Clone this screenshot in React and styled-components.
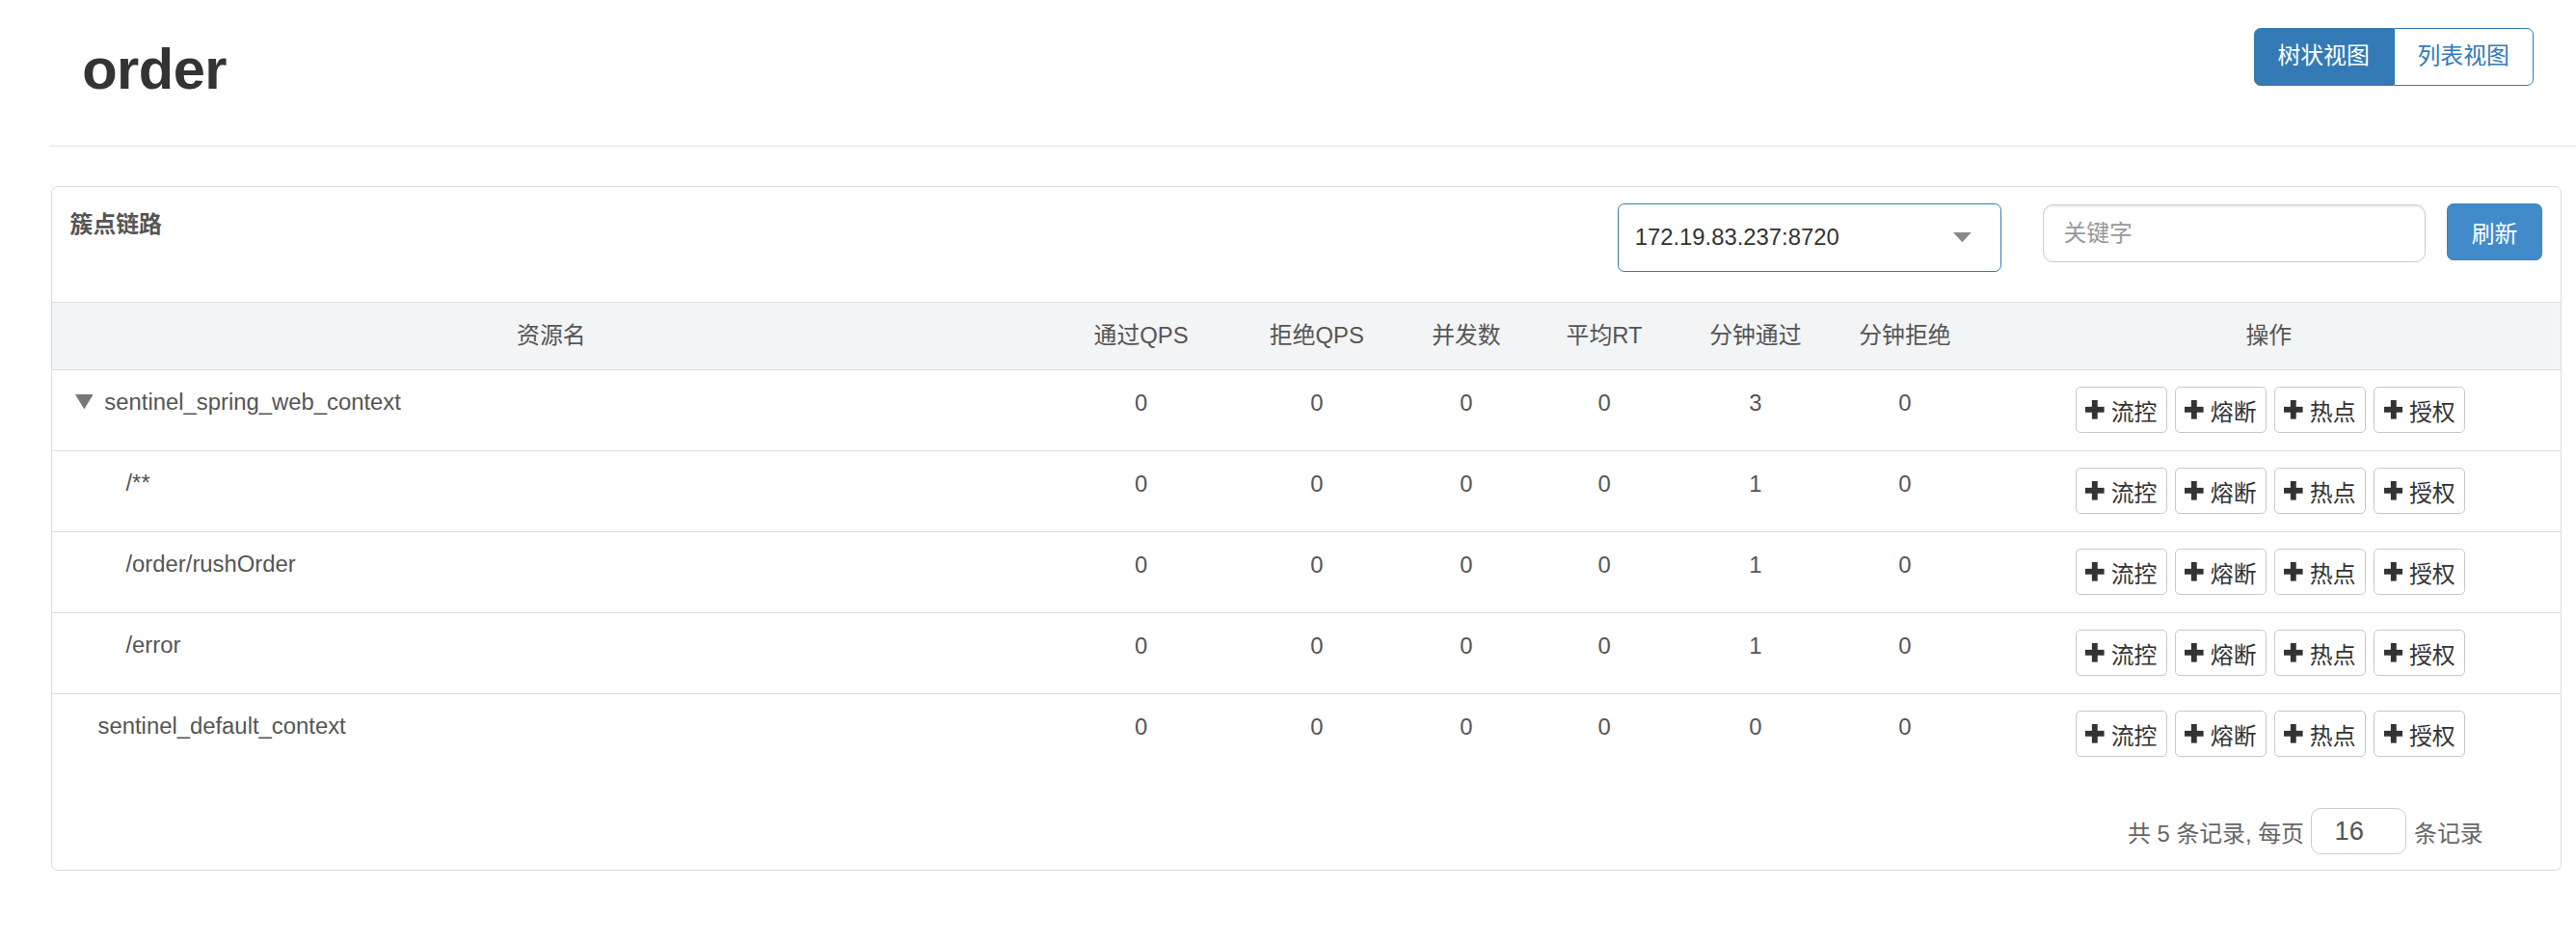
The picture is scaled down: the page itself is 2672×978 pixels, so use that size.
import React from "react";
import styled, { createGlobalStyle } from "styled-components";

const GlobalStyle = createGlobalStyle`
  html, body {
    margin: 0;
    padding: 0;
    background: #fff;
  }
  body {
    font-family: "Liberation Sans", Arial, "Noto Sans CJK SC", sans-serif;
    font-size: 14px;
    color: #333;
  }
  * {
    box-sizing: border-box;
  }
`;

const COLS = "608px 110px 104px 78px 90px 94px 88px 1fr";

const headers = ["资源名", "通过QPS", "拒绝QPS", "并发数", "平均RT", "分钟通过", "分钟拒绝", "操作"];

const rows = [
  { name: "sentinel_spring_web_context", level: "root", vals: [0, 0, 0, 0, 3, 0] },
  { name: "/**", level: "child", vals: [0, 0, 0, 0, 1, 0] },
  { name: "/order/rushOrder", level: "child", vals: [0, 0, 0, 0, 1, 0] },
  { name: "/error", level: "child", vals: [0, 0, 0, 0, 1, 0] },
  { name: "sentinel_default_context", level: "plain", vals: [0, 0, 0, 0, 0, 0] },
];

const actions = ["流控", "熔断", "热点", "授权"];

const indent = { root: 14, child: 45, plain: 28 };

function PlusIcon() {
  return (
    <svg width="11.5" height="11.5" viewBox="0 0 12 12">
      <rect x="4.2" y="0" width="3.6" height="12" fill="#333" />
      <rect x="0" y="4.2" width="12" height="3.6" fill="#333" />
    </svg>
  );
}

function App() {
  return (
    <Page>
      <GlobalStyle />
      <Header>
        <Title>order</Title>
        <ViewToggle>
          <ToggleButton $active>树状视图</ToggleButton>
          <ToggleButton>列表视图</ToggleButton>
        </ViewToggle>
      </Header>

      <Card>
        <CardHead>
          <CardTitle>簇点链路</CardTitle>
          <SelectBox>
            <span>172.19.83.237:8720</span>
            <svg width="11" height="6" viewBox="0 0 11 6">
              <polygon points="0,0 11,0 5.5,6" fill="#888" />
            </svg>
          </SelectBox>
          <SearchInput placeholder="关键字" />
          <RefreshButton>刷新</RefreshButton>
        </CardHead>

        <TableHead>
          {headers.map((h) => (
            <HeadCell key={h}>{h}</HeadCell>
          ))}
        </TableHead>

        {rows.map((r, i) => (
          <Row key={r.name} $last={i === rows.length - 1}>
            <NameCell $indent={indent[r.level]}>
              {r.level === "root" && (
                <svg width="11" height="9" viewBox="0 0 11 9">
                  <polygon points="0,0 11,0 5.5,9" fill="#777" />
                </svg>
              )}
              <span>{r.name}</span>
            </NameCell>
            {r.vals.map((v, j) => (
              <NumCell key={j}>{v}</NumCell>
            ))}
            <ActionCell>
              {actions.map((a) => (
                <ActionButton key={a}>
                  <PlusIcon />
                  {a}
                </ActionButton>
              ))}
            </ActionCell>
          </Row>
        ))}

        <Pager>
          <PagerText>共 5 条记录, 每页</PagerText>
          <PageSizeInput defaultValue="16" />
          <PagerText>条记录</PagerText>
        </Pager>
      </Card>
    </Page>
  );
}

export default App;

const Page = styled.div`
  zoom: 1.704;
  height: 574px;
  padding-left: 30px;
  overflow: hidden;
`;

const Header = styled.div`
  display: flex;
  justify-content: space-between;
  align-items: flex-start;
  height: 89px;
  padding: 0 26px 0 20px;
  border-bottom: 1px solid #e5e5e5;
`;

const Title = styled.h1`
  margin: 24px 0 0;
  font-size: 35px;
  line-height: 36px;
  font-weight: bold;
  letter-spacing: -0.3px;
  color: #333;
`;

const ViewToggle = styled.div`
  display: flex;
  margin-top: 17px;
`;

const ToggleButton = styled.div`
  height: 35px;
  padding: 0 14px;
  line-height: 33px;
  font-size: 14px;
  border: 1px solid #337ab7;
  background: ${(p) => (p.$active ? "#337ab7" : "#fff")};
  color: ${(p) => (p.$active ? "#fff" : "#337ab7")};
  &:first-child {
    border-radius: 4px 0 0 4px;
  }
  &:last-child {
    border-radius: 0 4px 4px 0;
  }
`;

const Card = styled.div`
  height: 417px;
  margin: 24px 9px 0 1px;
  border: 1px solid #ddd;
  border-radius: 4px;
  display: flex;
  flex-direction: column;
`;

const CardHead = styled.div`
  display: flex;
  align-items: flex-start;
  height: 70px;
  padding: 10px 11px 0 11px;
`;

const CardTitle = styled.div`
  flex: 1;
  margin-top: 3px;
  font-weight: bold;
  line-height: 20px;
  color: #555;
`;

const SelectBox = styled.div`
  display: flex;
  align-items: center;
  justify-content: space-between;
  width: 234px;
  height: 42px;
  margin-right: 25px;
  padding: 0 18px 0 10px;
  border: 1px solid #337ab7;
  border-radius: 4px;
  color: #333;
  font-size: 14px;
`;

const SearchInput = styled.input`
  width: 233px;
  height: 35px;
  margin: 1px 13px 0 0;
  padding: 0 12px;
  border: 1px solid #ccc;
  border-radius: 6px;
  font-family: inherit;
  font-size: 14px;
  color: #555;
  outline: none;
  box-shadow: inset 0 1px 1px rgba(0, 0, 0, 0.075);
  &::placeholder {
    color: #999;
  }
`;

const RefreshButton = styled.button`
  width: 58px;
  height: 35px;
  padding: 0;
  border: 1px solid #3a84c4;
  border-radius: 4px;
  background: #428bca;
  color: #fff;
  font-family: inherit;
  font-size: 14px;
`;

const TableHead = styled.div`
  display: grid;
  grid-template-columns: ${COLS};
  height: 42px;
  background: #f3f4f6;
  border-top: 1px solid #ddd;
  border-bottom: 1px solid #ddd;
`;

const HeadCell = styled.div`
  text-align: center;
  line-height: 40px;
  color: #555;
`;

const Row = styled.div`
  display: grid;
  grid-template-columns: ${COLS};
  height: 49.3px;
  border-bottom: ${(p) => (p.$last ? "none" : "1px solid #ddd")};
`;

const NameCell = styled.div`
  display: flex;
  align-items: center;
  align-self: start;
  gap: 7px;
  height: 20px;
  margin-top: 9px;
  padding-left: ${(p) => p.$indent}px;
  line-height: 20px;
  color: #555;
`;

const NumCell = styled.div`
  padding-top: 10px;
  text-align: center;
  line-height: 20px;
  color: #555;
`;

const ActionCell = styled.div`
  display: flex;
  justify-content: center;
  align-items: flex-start;
  gap: 4.5px;
  padding: 10px 0 0 2px;
`;

const ActionButton = styled.div`
  display: flex;
  align-items: center;
  justify-content: center;
  gap: 4px;
  width: 56px;
  height: 28px;
  border: 1px solid #c8c8c8;
  border-radius: 3px;
  background: #fff;
  color: #333;
  font-size: 14px;
`;

const Pager = styled.div`
  display: flex;
  justify-content: flex-end;
  align-items: center;
  margin-top: 20px;
  padding-right: 47px;
  height: 28px;
`;

const PagerText = styled.span`
  color: #666;
  font-size: 14px;
`;

const PageSizeInput = styled.input`
  width: 58px;
  height: 28px;
  margin: 0 5px 0 4px;
  padding: 0 0 0 14px;
  border: 1px solid #ccc;
  border-radius: 6px;
  font-family: inherit;
  font-size: 16px;
  color: #555;
  outline: none;
`;
